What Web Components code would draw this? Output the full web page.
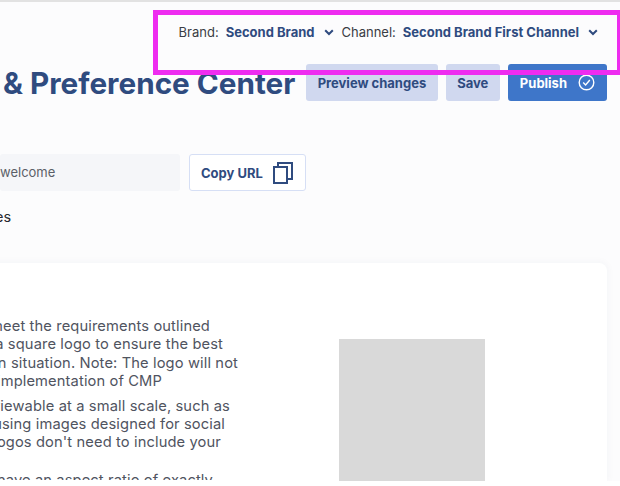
<!DOCTYPE html>
<html><head><meta charset="utf-8">
<style>
html,body{margin:0;padding:0;width:620px;height:486px;overflow:hidden;background:#fff;}
body{font-family:Inter,"Liberation Sans",sans-serif;}
</style></head><body>
<app-root></app-root>
<script>
function el(name,css,html){customElements.define(name,class extends HTMLElement{constructor(){super();this.attachShadow({mode:'open'}).innerHTML='<style>'+css+'</style>'+html}})}
el('brand-select',`:host{display:inline-flex;align-items:center;white-space:nowrap;font-size:13px;line-height:18px}
.l{color:#3a3d44;margin-right:7px}.v{color:#2f4b7f;font-weight:700}svg{margin-left:9px}`,
`<span class="l"><slot name="label"></slot></span><span class="v"><slot name="value"></slot></span><svg width="10" height="7" viewBox="0 0 10 7"><path d="M1.2 1.2 5 5l3.8-3.8" fill="none" stroke="#2f4b7f" stroke-width="2"/></svg>`);
el('ui-btn',`:host{display:inline-flex;align-items:center;justify-content:center;height:37px;box-sizing:border-box;border-radius:3px;font-size:13px;font-weight:700;white-space:nowrap;background:#d0d8ef;color:#2f4b7f;padding:0 11.5px;gap:10px}
:host([primary]){background:#3e76c9;color:#fff;padding:0 12px;gap:11px}
:host([ghost]){background:#fff;border:1px solid #d6dff5;padding:0 12px 0 11px}`,`<slot></slot><slot name="icon"></slot>`);
el('text-line',`:host{display:block;height:18.4px;white-space:nowrap;text-align:right}`,`<slot></slot>`);
el('logo-card',`:host{display:block;position:absolute;left:-60px;top:261px;width:667px;height:218px;overflow:hidden;background:#fff;border-radius:8px 8px 0 0;box-shadow:0 0 8px rgba(40,50,90,.05)}
.cols{display:flex;padding-top:54px}.txt{width:300px;height:163px;overflow:hidden;font-size:14.7px;line-height:18.4px;color:#50545f;letter-spacing:.12px}
.img{margin:22px 0 0 99px;width:146px;height:142px;background:#d9d9d9;flex:none}`,
`<div class="cols"><div class="txt"><slot></slot></div><div class="img"></div></div>`);
el('app-root',`:host{display:block;width:620px;height:481px;background:#fcfcfd;overflow:hidden;position:relative;border-top:2px solid #e2e2e2;box-sizing:border-box}
.head{display:flex;justify-content:flex-end;gap:8px;padding:19px 22px 0 0;height:41px;box-sizing:border-box}
.row{display:flex;align-items:flex-start;padding:21px 13px 0 0;gap:8px;height:37px;box-sizing:content-box}
h1{margin:0 auto 0 3px;font-size:29.7px;line-height:39px;font-weight:700;color:#2f4b7f;white-space:nowrap}
.url{display:flex;gap:9px;margin-top:53px}
.in{box-sizing:border-box;width:180px;height:37px;background:#f5f6f9;border-radius:3px;font-size:13px;line-height:37px;color:#5b5f68;white-space:nowrap;text-align:right;padding-right:127px}
.es{font-size:14.5px;line-height:20px;color:#26282e;margin-top:16px;white-space:nowrap;text-indent:-5px}
.mark{position:absolute;left:153px;top:8px;width:467px;height:65px;box-sizing:border-box;border:solid #ee2cf0;border-width:5px 3px 5px 5px}
`,`
<div class="head"><brand-select><span slot="label">Brand:</span><span slot="value">Second Brand</span></brand-select><brand-select><span slot="label">Channel:</span><span slot="value">Second Brand First Channel</span></brand-select></div>
<div class="row"><h1>&amp; Preference Center</h1><ui-btn>Preview changes</ui-btn><ui-btn>Save</ui-btn><ui-btn primary>Publish<svg slot="icon" width="17" height="17" viewBox="0 0 17 17" fill="none" stroke="#fff" stroke-width="1.4"><circle cx="8.5" cy="8.5" r="7.3"/><path d="M5.2 8.6 7.6 11 11.8 6"/></svg></ui-btn></div>
<div class="url"><div class="in">welcome</div><ui-btn ghost>Copy URL<svg slot="icon" width="20" height="22" viewBox="0 0 20 22" fill="none" stroke="#2f4b7f" stroke-width="2"><rect x="1" y="5" width="13" height="16"/><path d="M5 5V1h14v16h-5"/></svg></ui-btn></div>
<div class="es">es</div>
<logo-card>
<text-line style="padding-right:30px">meet the requirements outlined</text-line>
<text-line style="padding-right:17px">a square logo to ensure the best</text-line>
<text-line style="padding-right:2px">in situation. Note: The logo will not</text-line>
<text-line style="padding-right:78px">implementation of CMP</text-line>
<text-line style="padding-right:10px;margin-top:6px">viewable at a small scale, such as</text-line>
<text-line style="padding-right:15px">using images designed for social</text-line>
<text-line style="padding-right:19px">logos don't need to include your</text-line>
<text-line style="padding-right:27px;margin-top:19.4px">have an aspect ratio of exactly</text-line>
</logo-card>
<div class="mark"></div>`);
</script>
</body></html>
